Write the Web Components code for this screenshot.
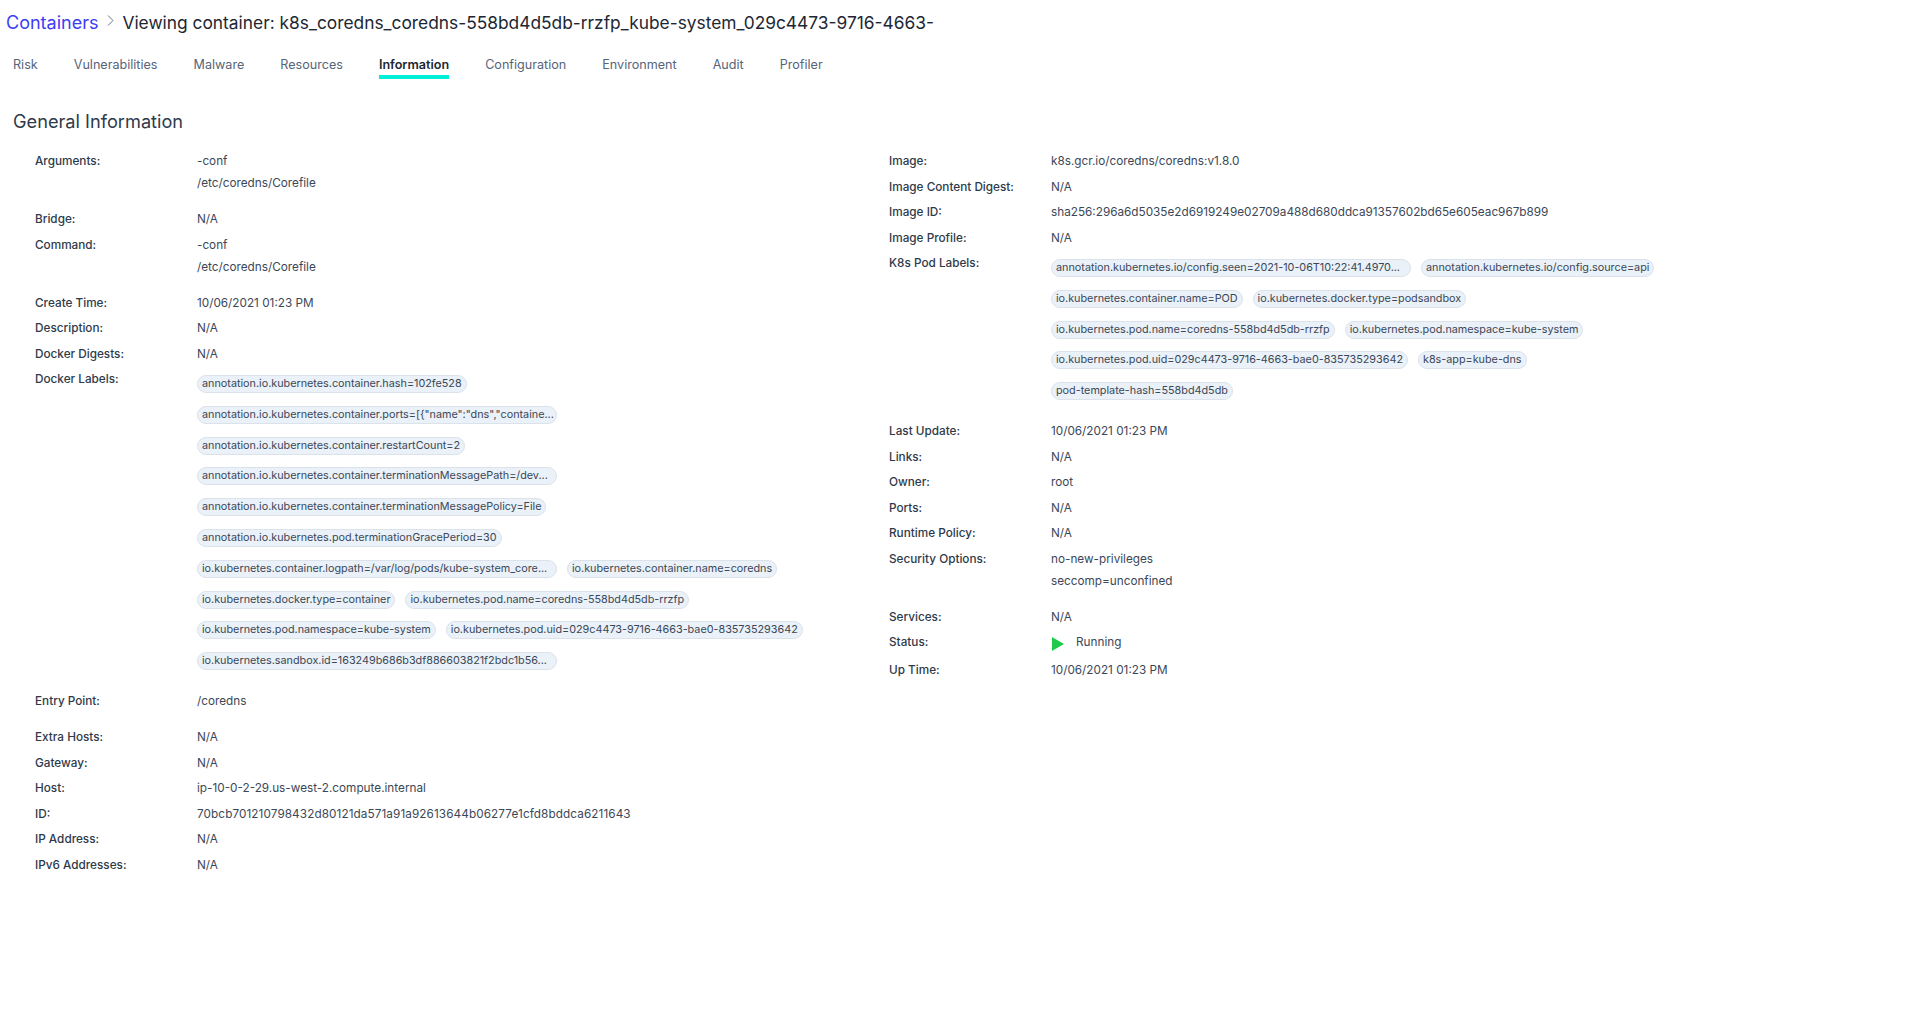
<!DOCTYPE html>
<html lang="en">
<head>
<meta charset="utf-8">
<title>Viewing container</title>
<style>
  html, body { margin:0; background:#fff; font-family:Inter, "Noto Sans", sans-serif; color:#2e3a4a; }
</style>
</head>
<body>
<page-header>
  <a slot="root">Containers</a>
  Viewing container: k8s_coredns_coredns-558bd4d5db-rrzfp_kube-system_029c4473-9716-4663-
</page-header>
<tab-bar active="Information" tabs="Risk,Vulnerabilities,Malware,Resources,Information,Configuration,Environment,Audit,Profiler"></tab-bar>
<info-panel heading="General Information">
  <info-col>
    <info-row label="Arguments:" list><info-line>-conf</info-line><info-line>/etc/coredns/Corefile</info-line></info-row>
    <info-row label="Bridge:">N/A</info-row>
    <info-row label="Command:" list><info-line>-conf</info-line><info-line>/etc/coredns/Corefile</info-line></info-row>
    <info-row label="Create Time:">10/06/2021 01:23 PM</info-row>
    <info-row label="Description:">N/A</info-row>
    <info-row label="Docker Digests:">N/A</info-row>
    <info-row label="Docker Labels:" chips>
      <info-chip>annotation.io.kubernetes.container.hash=102fe528</info-chip>
      <info-chip trunc>annotation.io.kubernetes.container.ports=[{"name":"dns","containe...</info-chip>
      <info-chip>annotation.io.kubernetes.container.restartCount=2</info-chip>
      <info-chip trunc>annotation.io.kubernetes.container.terminationMessagePath=/dev...</info-chip>
      <info-chip>annotation.io.kubernetes.container.terminationMessagePolicy=File</info-chip>
      <info-chip>annotation.io.kubernetes.pod.terminationGracePeriod=30</info-chip>
      <info-chip trunc>io.kubernetes.container.logpath=/var/log/pods/kube-system_core...</info-chip>
      <info-chip>io.kubernetes.container.name=coredns</info-chip>
      <info-chip>io.kubernetes.docker.type=container</info-chip>
      <info-chip>io.kubernetes.pod.name=coredns-558bd4d5db-rrzfp</info-chip>
      <info-chip>io.kubernetes.pod.namespace=kube-system</info-chip>
      <info-chip>io.kubernetes.pod.uid=029c4473-9716-4663-bae0-835735293642</info-chip>
      <info-chip trunc>io.kubernetes.sandbox.id=163249b686b3df886603821f2bdc1b56...</info-chip>
    </info-row>
    <info-row label="Entry Point:" list><info-line>/coredns</info-line></info-row>
    <info-row label="Extra Hosts:">N/A</info-row>
    <info-row label="Gateway:">N/A</info-row>
    <info-row label="Host:">ip-10-0-2-29.us-west-2.compute.internal</info-row>
    <info-row label="ID:"><info-line style="letter-spacing:.09px">70bcb701210798432d80121da571a91a92613644b06277e1cfd8bddca6211643</info-line></info-row>
    <info-row label="IP Address:">N/A</info-row>
    <info-row label="IPv6 Addresses:">N/A</info-row>
  </info-col>
  <info-col>
    <info-row label="Image:">k8s.gcr.io/coredns/coredns:v1.8.0</info-row>
    <info-row label="Image Content Digest:">N/A</info-row>
    <info-row label="Image ID:">sha256:296a6d5035e2d6919249e02709a488d680ddca91357602bd65e605eac967b899</info-row>
    <info-row label="Image Profile:">N/A</info-row>
    <info-row label="K8s Pod Labels:" chips>
      <info-chip trunc>annotation.kubernetes.io/config.seen=2021-10-06T10:22:41.4970...</info-chip>
      <info-chip>annotation.kubernetes.io/config.source=api</info-chip>
      <info-chip>io.kubernetes.container.name=POD</info-chip>
      <info-chip>io.kubernetes.docker.type=podsandbox</info-chip>
      <info-chip>io.kubernetes.pod.name=coredns-558bd4d5db-rrzfp</info-chip>
      <info-chip>io.kubernetes.pod.namespace=kube-system</info-chip>
      <info-chip>io.kubernetes.pod.uid=029c4473-9716-4663-bae0-835735293642</info-chip>
      <info-chip>k8s-app=kube-dns</info-chip>
      <info-chip>pod-template-hash=558bd4d5db</info-chip>
    </info-row>
    <info-row label="Last Update:">10/06/2021 01:23 PM</info-row>
    <info-row label="Links:">N/A</info-row>
    <info-row label="Owner:">root</info-row>
    <info-row label="Ports:">N/A</info-row>
    <info-row label="Runtime Policy:">N/A</info-row>
    <info-row label="Security Options:" list><info-line>no-new-privileges</info-line><info-line>seccomp=unconfined</info-line></info-row>
    <info-row label="Services:">N/A</info-row>
    <info-row label="Status:"><status-running>Running</status-running></info-row>
    <info-row label="Up Time:">10/06/2021 01:23 PM</info-row>
  </info-col>
</info-panel>

<script>
class PageHeader extends HTMLElement {
  constructor() {
    super();
    this.attachShadow({ mode: "open" }).innerHTML = `
      <style>
        :host { display:flex; align-items:center; height:45px; padding-left:6px; font-size:17.35px; color:#1d2733; white-space:nowrap; }
        ::slotted(a) { color:#3d3df5; font-size:18px; }
        svg { margin:0 7px 0 8px; width:9px; height:13px; flex:none; position:relative; top:-2px; }
      </style>
      <slot name="root"></slot>
      <svg viewBox="0 0 9 13" fill="none" stroke="#6b7685" stroke-width="1"><path d="M2 1.5l5 5-5 5"/></svg>
      <slot></slot>`;
  }
}
customElements.define("page-header", PageHeader);

class TabBar extends HTMLElement {
  constructor() {
    super();
    const tabs = (this.getAttribute("tabs") || "").split(",");
    const active = this.getAttribute("active");
    this.attachShadow({ mode: "open" }).innerHTML = `
      <style>
        :host { display:flex; gap:36px; padding-left:13px; height:37px; font-size:12.6px; color:#56657a; }
        .t { padding:10.5px 0 1.5px; line-height:18px; height:18px; border-bottom:4px solid transparent; }
        .t.on { font-weight:600; color:#1d2733; border-bottom-color:#00f0d8; }
      </style>
      ${tabs.map((t) => `<div class="t ${t === active ? "on" : ""}">${t}</div>`).join("")}`;
  }
}
customElements.define("tab-bar", TabBar);

class InfoPanel extends HTMLElement {
  constructor() {
    super();
    this.attachShadow({ mode: "open" }).innerHTML = `
      <style>
        :host { display:block; padding:27px 13px 0; }
        h2 { margin:0 0 17px; font-size:18.2px; line-height:24px; font-weight:400; color:#2e3a4a; }
        .cols { display:grid; grid-template-columns:854px 1fr; padding-left:22px; }
      </style>
      <h2>${this.getAttribute("heading")}</h2>
      <div class="cols"><slot></slot></div>`;
  }
}
customElements.define("info-panel", InfoPanel);

class InfoCol extends HTMLElement {
  constructor() {
    super();
    this.attachShadow({ mode: "open" }).innerHTML = `
      <style>:host { display:block; }</style><slot></slot>`;
  }
}
customElements.define("info-col", InfoCol);

class InfoRow extends HTMLElement {
  constructor() {
    super();
    const list = this.hasAttribute("list");
    const chips = this.hasAttribute("chips");
    this.attachShadow({ mode: "open" }).innerHTML = `
      <style>
        :host { display:grid; grid-template-columns:162px 1fr; font-size:11.75px; line-height:22px; min-height:25.5px; color:#3b4757; }
        .k { font-weight:500; color:#2e3a4a; }
        .list { padding-bottom:14px; }
        .chips { display:flex; flex-wrap:wrap; gap:12.8px 10px; padding:7px 0 20px; max-width:620px; align-content:flex-start; }
      </style>
      <div class="k">${this.getAttribute("label")}</div>
      <div class="${chips ? "chips" : list ? "list" : ""}"><slot></slot></div>`;
  }
}
customElements.define("info-row", InfoRow);

class InfoLine extends HTMLElement {
  constructor() {
    super();
    this.attachShadow({ mode: "open" }).innerHTML = `
      <style>:host { display:block; }</style><slot></slot>`;
  }
}
customElements.define("info-line", InfoLine);

class InfoChip extends HTMLElement {
  constructor() {
    super();
    this.attachShadow({ mode: "open" }).innerHTML = `
      <style>
        :host { display:inline-flex; align-items:center; box-sizing:border-box; height:18px; max-width:360px; padding:0 4px; font-size:10.8px; line-height:16px; white-space:nowrap; color:#3b4757; background:#eaf1f8; border:1px solid #dbe2ea; border-radius:9px; }
        :host([trunc]) { width:360px; }
      </style>
      <slot></slot>`;
  }
}
customElements.define("info-chip", InfoChip);

class StatusRunning extends HTMLElement {
  constructor() {
    super();
    this.attachShadow({ mode: "open" }).innerHTML = `
      <style>
        :host { display:flex; align-items:flex-start; gap:12px; height:28px; margin-left:1px; }
        svg { width:12px; height:14px; margin-top:6px; flex:none; }
      </style>
      <svg viewBox="0 0 12 14"><path d="M0 0l12 7-12 7z" fill="#22c94c"/></svg>
      <slot></slot>`;
  }
}
customElements.define("status-running", StatusRunning);
</script>
</body>
</html>
